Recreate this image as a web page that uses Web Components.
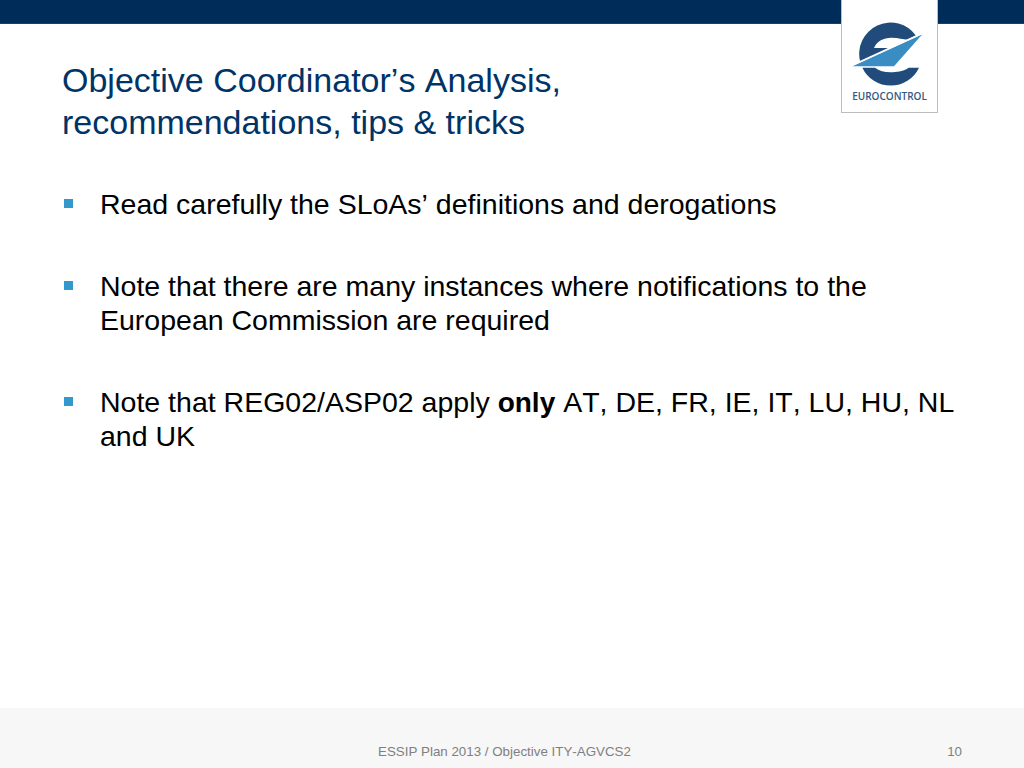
<!DOCTYPE html>
<html>
<head>
<meta charset="utf-8">
<title>Objective Coordinator's Analysis</title>
<style>
  html, body { margin: 0; padding: 0; background: #fff; }
  body { width: 1024px; height: 768px; overflow: hidden; font-family: "Liberation Sans", Arial, sans-serif; font-kerning: none; }
  slide-bullet b { font-size: 28px; line-height: 0; }
</style>
</head>
<body>
<slide-frame>
  <slide-title slot="title">Objective Coordinator’s Analysis,<br>recommendations, tips &amp; tricks</slide-title>
  <slide-bullet>Read carefully the SLoAs’ definitions and derogations</slide-bullet>
  <slide-bullet>Note that there are many instances where notifications to the European Commission are required</slide-bullet>
  <slide-bullet>Note that REG02/ASP02 apply <b>only</b> AT, DE, FR, IE, IT, LU, HU, NL and UK</slide-bullet>
  <span slot="footer">ESSIP Plan 2013 / Objective ITY-AGVCS2</span>
  <span slot="page">10</span>
</slide-frame>

<script>
// Top bar, logo tab, content column and footer of the slide
class SlideFrame extends HTMLElement {
  constructor() {
    super();
    this.attachShadow({ mode: 'open' });
    this.shadowRoot.innerHTML = `
      <style>
        :host { display: flex; flex-direction: column; width: 1024px; height: 768px; position: relative; }
        .bar { height: 23px; flex: none; background: #002c5a; border-bottom: 1px solid #1a3f68; }
        .main { flex: 1; padding: 35px 62px 0 62px; display: flex; flex-direction: column; }
        .bullets { display: flex; flex-direction: column; gap: 48px; margin-top: 44px; }
        footer { height: 60px; flex: none; background: #f7f7f7; display: grid; grid-template-columns: 378px 1fr auto; padding: 36px 62px 0 0; box-sizing: border-box; font-size: 13.35px; line-height: 16px; color: #7f7f7f; }
        .foot-text { grid-column: 2; }
        eurocontrol-logo { position: absolute; top: 0; left: 841px; }
      </style>
      <div class="bar"></div>
      <eurocontrol-logo></eurocontrol-logo>
      <div class="main">
        <slot name="title"></slot>
        <div class="bullets"><slot></slot></div>
      </div>
      <footer>
        <div class="foot-text"><slot name="footer"></slot></div>
        <div><slot name="page"></slot></div>
      </footer>
    `;
  }
}

class SlideTitle extends HTMLElement {
  constructor() {
    super();
    this.attachShadow({ mode: 'open' });
    this.shadowRoot.innerHTML = `
      <style>
        :host { display: block; font-size: 34px; line-height: 42px; color: #003366; }
      </style>
      <slot></slot>
    `;
  }
}

class SlideBullet extends HTMLElement {
  constructor() {
    super();
    this.attachShadow({ mode: 'open' });
    this.shadowRoot.innerHTML = `
      <style>
        :host { display: grid; grid-template-columns: 38px 1fr; font-size: 28.5px; line-height: 34px; color: #000; }
        .mark { width: 8.5px; height: 9px; margin: 12px 0 0 2px; background: #3399cc; }
      </style>
      <div class="mark"></div>
      <div><slot></slot></div>
    `;
  }
}

class EurocontrolLogo extends HTMLElement {
  constructor() {
    super();
    this.attachShadow({ mode: 'open' });
    this.shadowRoot.innerHTML = `
      <style>
        :host { display: flex; flex-direction: column; align-items: center; box-sizing: border-box; width: 97px; height: 113px; background: #fff; border: 1px solid #bdbdbd; border-top: 0; }
        svg { display: block; margin-top: 20px; }
        .name { font-family: "Open Sans", sans-serif; font-weight: 600; font-size: 10px; line-height: 14px; margin-top: 2px; color: #34597f; white-space: nowrap; }
      </style>
      <svg width="80" height="67" viewBox="90 60 240 201">
        <path fill="#204b7b" d="M288 107A94 94 0 0 0 120.5 185L203 149L203 144L162 144C170 122 195 112 215 113C235 113 250 118 262 119Z"/>
        <path fill="#204b7b" d="M127 203L165 203C180 215 200 218 225 216C245 214 258 210 266 203L297 203A94 94 0 0 1 127 203Z"/>
        <path fill="#3a8dc3" d="M97 199L307 103L222 199Z"/>
        <path stroke="#fff" stroke-width="5" fill="none" d="M97 196L307 100"/>
      </svg>
      <div class="name">EUROCONTROL</div>
    `;
  }
}

customElements.define('eurocontrol-logo', EurocontrolLogo);
customElements.define('slide-frame', SlideFrame);
customElements.define('slide-title', SlideTitle);
customElements.define('slide-bullet', SlideBullet);
</script>
</body>
</html>
